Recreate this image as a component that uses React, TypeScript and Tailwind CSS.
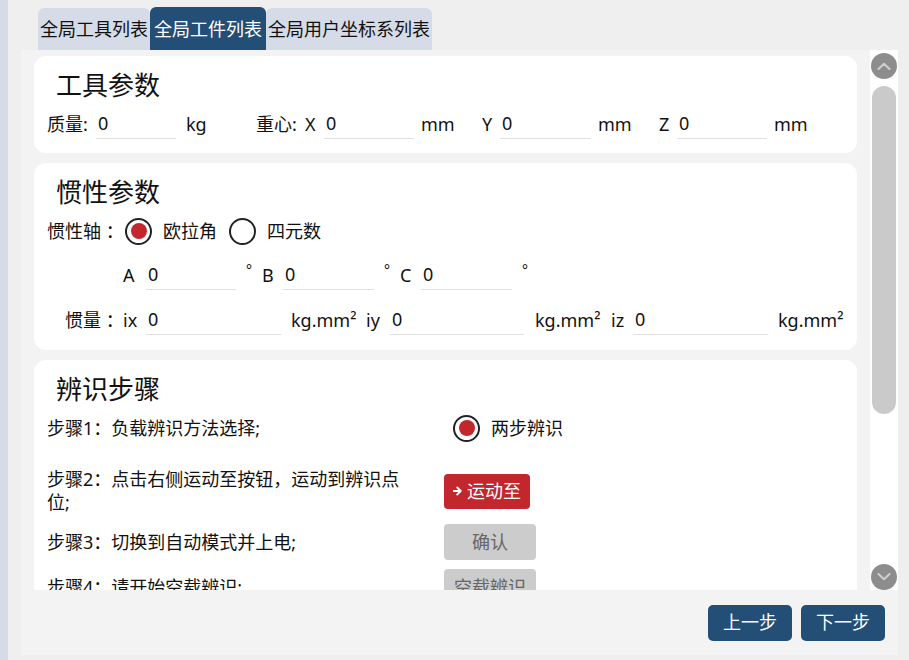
import { ReactNode } from "react";

function Field({ className }: { className: string }) {
  return (
    <div className={`flex h-[30px] shrink-0 items-center border-b border-[#e0e0e0] pl-[2px] ${className}`}>0</div>
  );
}

function Radio({ checked }: { checked?: boolean }) {
  return (
    <span className="flex h-[27px] w-[27px] shrink-0 items-center justify-center rounded-full border-[2.5px] border-[#222]">
      {checked && <span className="h-[16px] w-[16px] rounded-full bg-[#c1272d]" />}
    </span>
  );
}

function Card({ className, title, children }: { className: string; title: string; children: ReactNode }) {
  return (
    <div className={`shrink-0 rounded-[12px] bg-white pt-[14px] ${className}`}>
      <div className="pl-[22px] text-[26px] leading-[30px]">{title}</div>
      {children}
    </div>
  );
}

function Chevron({ up }: { up?: boolean }) {
  return (
    <div className="flex h-[26px] w-[26px] items-center justify-center rounded-full bg-[#8d8d8d]">
      <svg width="14" height="8" viewBox="0 0 14 8" fill="none">
        <path
          d={up ? "M1.5 7 L7 1.8 L12.5 7" : "M1.5 1 L7 6.2 L12.5 1"}
          stroke="#cfcfcf"
          strokeWidth="2"
          strokeLinecap="round"
          strokeLinejoin="round"
        />
      </svg>
    </div>
  );
}

const grayBtn = "flex h-[36px] w-[92px] items-center justify-center rounded-[4px] bg-[#cccccc] text-[#666]";
const navBtn = "flex h-[36px] w-[84px] items-center justify-center rounded-[5px] bg-[#234e75] text-white";

export default function App() {
  return (
    <div className="flex h-[660px] w-[909px] overflow-hidden bg-[#efefef] font-['Noto_Sans','Noto_Sans_CJK_SC',sans-serif] text-[18px] text-[#111]">
      <div className="w-[8px] shrink-0 bg-[#d5dce7]" />

      <div className="ml-[13px] flex w-[877px] flex-col">
        {/* tabs */}
        <div className="flex h-[50px] items-end pl-[17px] leading-none">
          <div className="flex h-[42px] w-[112px] items-center justify-center rounded-t-[6px] bg-[#d5dce7]">全局工具列表</div>
          <div className="flex h-[43px] w-[116px] items-center justify-center rounded-t-[6px] bg-[#234e75] text-white">全局工件列表</div>
          <div className="flex h-[42px] w-[166px] items-center justify-center rounded-t-[6px] bg-[#d5dce7]">全局用户坐标系列表</div>
        </div>

        <div className="flex h-[605px] flex-col bg-[#f3f3f3]">
          <div className="flex h-[540px]">
            <div className="flex flex-1 flex-col gap-[10px] overflow-hidden px-[13px] pt-[6px]">
              <Card className="h-[97px]" title="工具参数">
                <div className="mt-[6px] flex h-[36px] items-center whitespace-nowrap pl-[13px]">
                  <span className="w-[49px] shrink-0">质量:</span>
                  <Field className="w-[80px]" />
                  <span className="ml-[10px] w-[70px] shrink-0">kg</span>
                  <span className="w-[49px] shrink-0">重心:</span>
                  <span className="w-[19px] shrink-0">X</span>
                  <Field className="w-[90px]" />
                  <span className="ml-[7px] w-[61px] shrink-0">mm</span>
                  <span className="w-[18px] shrink-0">Y</span>
                  <Field className="w-[91px]" />
                  <span className="ml-[7px] w-[61px] shrink-0">mm</span>
                  <span className="w-[18px] shrink-0">Z</span>
                  <Field className="w-[90px]" />
                  <span className="ml-[7px]">mm</span>
                </div>
              </Card>

              <Card className="h-[187px]" title="惯性参数">
                <div className="mt-[6px] flex h-[36px] items-center whitespace-nowrap pl-[13px]">
                  <span className="w-[78px] shrink-0">惯性轴 ：</span>
                  <Radio checked />
                  <span className="ml-[11px] w-[66px] shrink-0">欧拉角</span>
                  <Radio />
                  <span className="ml-[11px]">四元数</span>
                </div>
                <div className="mt-[8px] flex h-[36px] items-center whitespace-nowrap pl-[89px]">
                  <span className="w-[23px] shrink-0">A</span>
                  <Field className="w-[90px]" />
                  <span className="ml-[10px] w-[16px] shrink-0 self-start pt-[2px] text-[14px]">°</span>
                  <span className="w-[21px] shrink-0">B</span>
                  <Field className="w-[91px]" />
                  <span className="ml-[10px] w-[16px] shrink-0 self-start pt-[2px] text-[14px]">°</span>
                  <span className="w-[21px] shrink-0">C</span>
                  <Field className="w-[91px]" />
                  <span className="ml-[10px] w-[16px] shrink-0 self-start pt-[2px] text-[14px]">°</span>
                </div>
                <div className="mt-[9px] flex h-[36px] items-center whitespace-nowrap pl-[31px]">
                  <span className="w-[58px] shrink-0">惯量 ：</span>
                  <span className="w-[23px] shrink-0">ix</span>
                  <Field className="w-[135px]" />
                  <span className="ml-[10px] w-[75px] shrink-0">kg.mm²</span>
                  <span className="w-[24px] shrink-0">iy</span>
                  <Field className="w-[134px]" />
                  <span className="ml-[11px] w-[76px] shrink-0">kg.mm²</span>
                  <span className="w-[22px] shrink-0">iz</span>
                  <Field className="w-[135px]" />
                  <span className="ml-[10px]">kg.mm²</span>
                </div>
              </Card>

              <Card className="h-[300px]" title="辨识步骤">
                <div className="mt-[6px] flex h-[36px] items-center pl-[13px]">
                  <div className="w-[360px]">步骤1：负载辨识方法选择;</div>
                  <div className="ml-[46px] flex items-center">
                    <Radio checked />
                    <span className="ml-[11px]">两步辨识</span>
                  </div>
                </div>
                <div className="mt-[22px] flex items-center pl-[13px]">
                  <div className="w-[360px] leading-[23px]">步骤2：点击右侧运动至按钮，运动到辨识点位;</div>
                  <button className="ml-[37px] flex h-[35px] w-[86px] items-center justify-center gap-[5px] rounded-[4px] bg-[#c1272d] text-white">
                    <svg width="9" height="10" viewBox="0 0 9 10" fill="none">
                      <path d="M0.5 5 H7.5 M4.2 1.5 L7.8 5 L4.2 8.5" stroke="white" strokeWidth="1.8" strokeLinecap="round" strokeLinejoin="round" />
                    </svg>
                    运动至
                  </button>
                </div>
                <div className="mt-[10px] flex items-center pl-[13px]">
                  <div className="w-[360px]">步骤3：切换到自动模式并上电;</div>
                  <button className={`ml-[37px] ${grayBtn}`}>确认</button>
                </div>
                <div className="mt-[9px] flex items-center pl-[13px]">
                  <div className="w-[360px]">步骤4：请开始空载辨识;</div>
                  <button className={`ml-[37px] ${grayBtn}`}>空载辨识</button>
                </div>
              </Card>
            </div>

            {/* scrollbar */}
            <div className="flex w-[28px] flex-col items-center bg-white">
              <div className="mt-[3px]">
                <Chevron up />
              </div>
              <div className="mt-[7px] h-[328px] w-[24px] rounded-[12px] bg-[#cacaca]" />
              <div className="mt-auto">
                <Chevron />
              </div>
            </div>
          </div>

          <div className="flex flex-1 items-center justify-end gap-[9px] pr-[13px]">
            <button className={navBtn}>上一步</button>
            <button className={navBtn}>下一步</button>
          </div>
        </div>
      </div>
    </div>
  );
}
